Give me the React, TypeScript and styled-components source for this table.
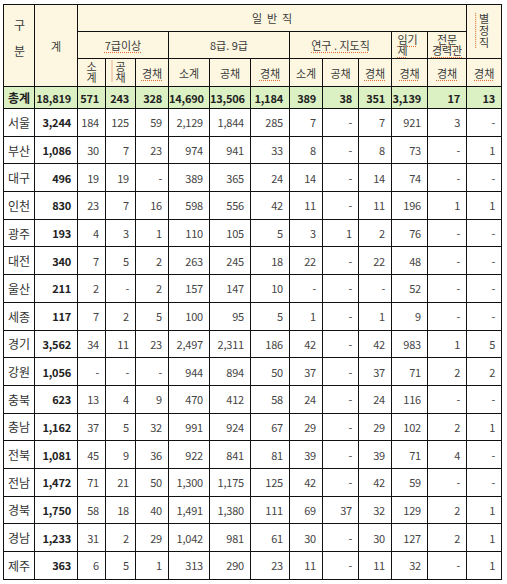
import React from 'react'
import styled, { createGlobalStyle } from 'styled-components'

const GlobalStyle = createGlobalStyle`
  html, body {
    margin: 0;
    padding: 0;
    background: #ffffff;
  }
  body {
    font-family: 'Noto Sans CJK KR', 'Noto Sans', sans-serif;
    color: #333;
  }
`

const Page = styled.div`
  padding: 4px 0 0 3px;
`

const Table = styled.table`
  border-collapse: collapse;
  table-layout: fixed;
  width: 498px;
  border: 1px solid #111;
  font-size: 11px;
`

const HeadCell = styled.th`
  background: #fdf7e1;
  border: 1px solid #111;
  font-weight: 400;
  color: #3a3a3a;
  text-align: center;
  vertical-align: middle;
  padding: 0;
  line-height: 12px;
  font-size: 11px;
`

const Spell = styled.span`
  text-decoration: underline dotted #e0703a;
  text-underline-offset: 2px;
`

const Vertical = styled.span<{ $gap?: number }>`
  display: inline-block;
  writing-mode: vertical-lr;
  text-orientation: upright;
  letter-spacing: ${({ $gap }) => $gap ?? 0}px;
  line-height: 12px;
  font-size: 11px;
`

const Wrap = styled.span<{ $w: number; $keep?: boolean }>`
  display: inline-block;
  width: ${({ $w }) => $w}px;
  line-height: 11px;
  word-break: ${({ $keep }) => ($keep ? 'keep-all' : 'break-all')};
  text-align: ${({ $keep }) => ($keep ? 'center' : 'left')};
`

const HeadRow = styled.tr<{ $h: number }>`
  height: ${({ $h }) => $h}px;
`

const TotalRow = styled.tr`
  height: 22px;
  background: #dcf1c3;

  & > td {
    border-top: 1px dashed #333;
    font-weight: 700;
    color: #222;
  }
`

const BodyRow = styled.tr`
  height: 27.7px;
`

const NameCell = styled.td`
  border: 1px solid #111;
  text-align: center;
  padding: 0;
  font-size: 12px;
  color: #333;
`

const NumCell = styled.td<{ $bold?: boolean }>`
  border: 1px solid #111;
  text-align: right;
  padding: 0 6px 0 0;
  font-size: 11px;
  letter-spacing: -0.2px;
  font-weight: ${({ $bold }) => ($bold ? 700 : 400)};
  color: ${({ $bold }) => ($bold ? '#222' : '#444')};
  white-space: nowrap;
`

const widths = [31, 43, 28, 30, 33, 41, 41, 39, 33, 36, 33, 36, 39, 35]

type Row = [string, ...string[]]

const total: Row = ['총계', '18,819', '571', '243', '328', '14,690', '13,506', '1,184', '389', '38', '351', '3,139', '17', '13']

const rows: Row[] = [
  ['서울', '3,244', '184', '125', '59', '2,129', '1,844', '285', '7', '-', '7', '921', '3', '-'],
  ['부산', '1,086', '30', '7', '23', '974', '941', '33', '8', '-', '8', '73', '-', '1'],
  ['대구', '496', '19', '19', '-', '389', '365', '24', '14', '-', '14', '74', '-', '-'],
  ['인천', '830', '23', '7', '16', '598', '556', '42', '11', '-', '11', '196', '1', '1'],
  ['광주', '193', '4', '3', '1', '110', '105', '5', '3', '1', '2', '76', '-', '-'],
  ['대전', '340', '7', '5', '2', '263', '245', '18', '22', '-', '22', '48', '-', '-'],
  ['울산', '211', '2', '-', '2', '157', '147', '10', '-', '-', '-', '52', '-', '-'],
  ['세종', '117', '7', '2', '5', '100', '95', '5', '1', '-', '1', '9', '-', '-'],
  ['경기', '3,562', '34', '11', '23', '2,497', '2,311', '186', '42', '-', '42', '983', '1', '5'],
  ['강원', '1,056', '-', '-', '-', '944', '894', '50', '37', '-', '37', '71', '2', '2'],
  ['충북', '623', '13', '4', '9', '470', '412', '58', '24', '-', '24', '116', '-', '-'],
  ['충남', '1,162', '37', '5', '32', '991', '924', '67', '29', '-', '29', '102', '2', '1'],
  ['전북', '1,081', '45', '9', '36', '922', '841', '81', '39', '-', '39', '71', '4', '-'],
  ['전남', '1,472', '71', '21', '50', '1,300', '1,175', '125', '42', '-', '42', '59', '-', '-'],
  ['경북', '1,750', '58', '18', '40', '1,491', '1,380', '111', '69', '37', '32', '129', '2', '1'],
  ['경남', '1,233', '31', '2', '29', '1,042', '981', '61', '30', '-', '30', '127', '2', '1'],
  ['제주', '363', '6', '5', '1', '313', '290', '23', '11', '-', '11', '32', '-', '1'],
]

const App = () => {
  return (
    <Page>
      <GlobalStyle />
      <Table>
        <colgroup>
          {widths.map((w, i) => (
            <col key={i} style={{ width: w }} />
          ))}
        </colgroup>
        <thead>
          <HeadRow $h={27}>
            <HeadCell rowSpan={3}>
              <Vertical $gap={14} style={{ fontSize: 12 }}>
                구분
              </Vertical>
            </HeadCell>
            <HeadCell rowSpan={3}>계</HeadCell>
            <HeadCell colSpan={11}>일&nbsp; 반&nbsp; 직</HeadCell>
            <HeadCell rowSpan={2}>
              <Vertical $gap={1}>
                <Spell>별정직</Spell>
              </Vertical>
            </HeadCell>
          </HeadRow>
          <HeadRow $h={27}>
            <HeadCell colSpan={3}>
              <Spell>7급이상</Spell>
            </HeadCell>
            <HeadCell colSpan={3}>8급. 9급</HeadCell>
            <HeadCell colSpan={3}>
              <Spell>연구 . 지도직</Spell>
            </HeadCell>
            <HeadCell>
              <Wrap $w={24}>
                <Spell>임기제</Spell>
              </Wrap>
            </HeadCell>
            <HeadCell>
              <Wrap $w={36} $keep>
                <Spell>전문 경력관</Spell>
              </Wrap>
            </HeadCell>
          </HeadRow>
          <HeadRow $h={28}>
            <HeadCell>
              <Vertical>소계</Vertical>
            </HeadCell>
            <HeadCell>
              <Vertical>
                <Spell>공채</Spell>
              </Vertical>
            </HeadCell>
            <HeadCell>
              <Spell>경채</Spell>
            </HeadCell>
            <HeadCell>소계</HeadCell>
            <HeadCell>공채</HeadCell>
            <HeadCell>
              <Spell>경채</Spell>
            </HeadCell>
            <HeadCell>소계</HeadCell>
            <HeadCell>공채</HeadCell>
            <HeadCell>
              <Spell>경채</Spell>
            </HeadCell>
            <HeadCell>
              <Spell>경채</Spell>
            </HeadCell>
            <HeadCell>
              <Spell>경채</Spell>
            </HeadCell>
            <HeadCell>
              <Spell>경채</Spell>
            </HeadCell>
          </HeadRow>
        </thead>
        <tbody>
          <TotalRow>
            <NameCell>{total[0]}</NameCell>
            {total.slice(1).map((v, i) => (
              <NumCell key={i} $bold>
                {v}
              </NumCell>
            ))}
          </TotalRow>
          {rows.map((r) => (
            <BodyRow key={r[0]}>
              <NameCell>{r[0]}</NameCell>
              {r.slice(1).map((v, i) => (
                <NumCell key={i} $bold={i === 0}>
                  {v}
                </NumCell>
              ))}
            </BodyRow>
          ))}
        </tbody>
      </Table>
    </Page>
  )
}

export default App
